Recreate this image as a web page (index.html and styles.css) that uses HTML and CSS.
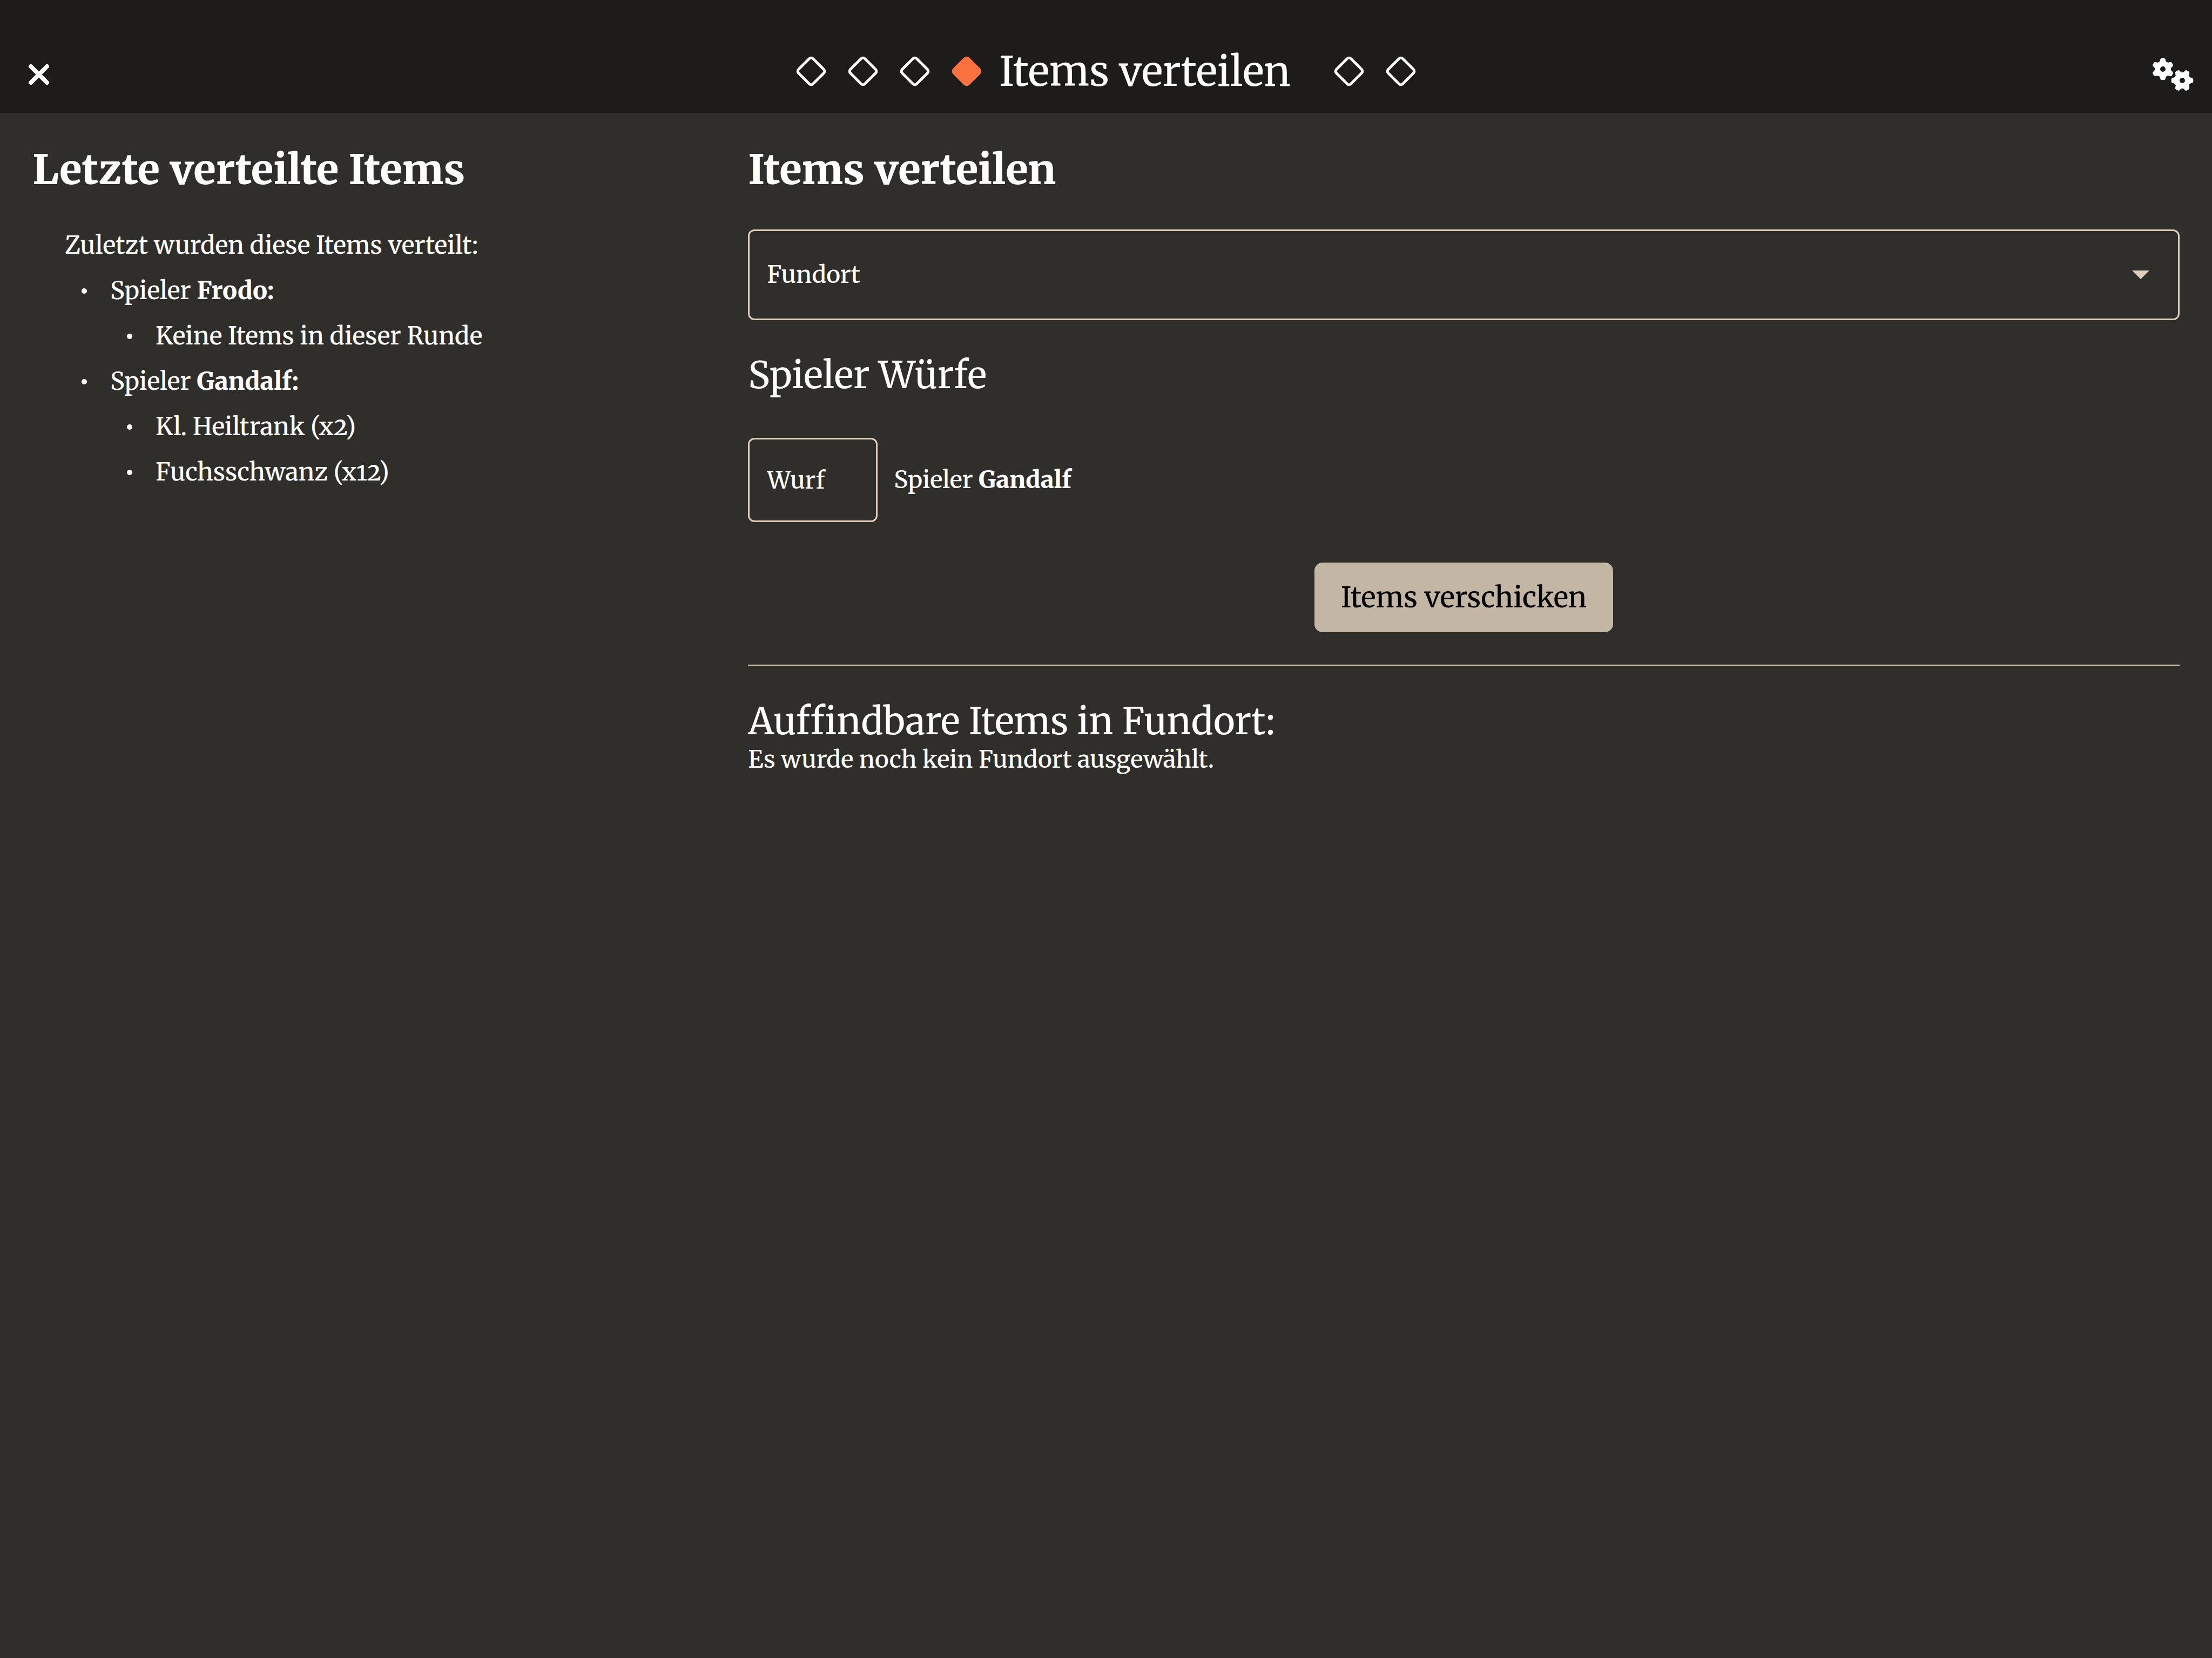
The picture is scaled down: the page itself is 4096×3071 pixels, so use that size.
FILE: index.html
```html
<!DOCTYPE html>
<html lang="de">
<head>
<meta charset="utf-8">
<meta name="viewport" content="width=device-width, initial-scale=1">
<title>Items verteilen</title>
<link rel="stylesheet" href="styles.css">
</head>
<body>
<svg class="defs" aria-hidden="true">
  <symbol id="diamond" viewBox="0 0 56 56">
    <rect x="9" y="9" width="38" height="38" rx="5" transform="rotate(45 28 28)" stroke-width="5"/>
  </symbol>
  <path id="tooth" d="M-9-11Q-5.500-13-5-17Q-4.500-20.300-1.500-20.300H1.500Q4.500-20.300 5-17Q5.500-13 9-11L0 0Z"/>
  <g id="gear">
    <circle r="15"/>
    <use href="#tooth"/>
    <use href="#tooth" transform="rotate(60)"/>
    <use href="#tooth" transform="rotate(120)"/>
    <use href="#tooth" transform="rotate(180)"/>
    <use href="#tooth" transform="rotate(240)"/>
    <use href="#tooth" transform="rotate(300)"/>
    <circle class="gear-hole" r="5"/>
  </g>
</svg>

<header class="topbar">
  <button class="icon-button" type="button" aria-label="Schließen">
    <svg class="icon-close" viewBox="0 0 38 38"><path d="M4 4L34 34M34 4L4 34"/></svg>
  </button>
  <nav class="steps" aria-label="Schritte">
    <button class="step" type="button" aria-label="Schritt 1"><svg><use href="#diamond"/></svg></button>
    <button class="step" type="button" aria-label="Schritt 2"><svg><use href="#diamond"/></svg></button>
    <button class="step" type="button" aria-label="Schritt 3"><svg><use href="#diamond"/></svg></button>
    <button class="step step-active" type="button" aria-label="Schritt 4" aria-current="step"><svg><use href="#diamond"/></svg></button>
    <span class="steps-title">Items verteilen</span>
    <button class="step" type="button" aria-label="Schritt 5"><svg><use href="#diamond"/></svg></button>
    <button class="step" type="button" aria-label="Schritt 6"><svg><use href="#diamond"/></svg></button>
  </nav>
  <button class="icon-button" type="button" aria-label="Einstellungen">
    <svg class="icon-gears" viewBox="0 0 76 62">
      <use href="#gear" transform="translate(19 21)"/>
      <use href="#gear" transform="translate(55 42) rotate(30)"/>
    </svg>
  </button>
</header>

<main class="content">
  <section class="history">
    <h1>Letzte verteilte Items</h1>
    <div class="history-body">
      <p>Zuletzt wurden diese Items verteilt:</p>
      <ul>
        <li><div>Spieler <b>Frodo:</b>
          <ul>
            <li>Keine Items in dieser Runde</li>
          </ul></div>
        </li>
        <li><div>Spieler <b>Gandalf:</b>
          <ul>
            <li>Kl. Heiltrank (x2)</li>
            <li>Fuchsschwanz (x12)</li>
          </ul></div>
        </li>
      </ul>
    </div>
  </section>

  <section class="distribute">
    <h1>Items verteilen</h1>
    <div class="select-box">
      <select class="field" aria-label="Fundort">
        <option>Fundort</option>
      </select>
      <svg class="caret" viewBox="0 0 32 16"><path d="M0 0H32L16 16Z"/></svg>
    </div>
    <h2>Spieler Würfe</h2>
    <div class="roll">
      <input class="field roll-input" id="roll-gandalf" type="text" inputmode="numeric" placeholder="Wurf">
      <label for="roll-gandalf">Spieler <b>Gandalf</b></label>
    </div>
    <button class="send" type="button">Items verschicken</button>
    <hr>
    <h2>Auffindbare Items in Fundort:</h2>
    <p class="hint">Es wurde noch kein Fundort ausgewählt.</p>
  </section>
</main>
</body>
</html>
```
FILE: styles.css
```css
:root {
  --bar: #1d1c1a;
  --page: #2f2e2a;
  --line: #decfbc;
  --sand: #c3b6a5;
  --accent: #fb713f;
}

* {
  box-sizing: border-box;
}

body {
  margin: 0;
  min-height: 100vh;
  background: var(--page);
  color: #fff;
  font: 500 44px/60px Merriweather, "DejaVu Serif Condensed", "DejaVu Serif", serif;
  font-variant-numeric: oldstyle-nums;
}

button,
input,
select {
  font: inherit;
  color: inherit;
  margin: 0;
}

b {
  font-weight: 800;
}

h1,
h2,
p,
ul {
  margin: 0;
  padding: 0;
}

.defs {
  display: none;
}

.topbar {
  display: grid;
  grid-template-columns: 1fr auto 1fr;
  align-items: center;
  height: 209px;
  padding: 54px 32px 0;
  background: var(--bar);
}

.icon-button {
  display: flex;
  justify-self: start;
  padding: 12px 21px 0;
  border: 0;
  background: none;
}

.icon-button:last-child {
  justify-self: end;
  padding: 12px 2px 0;
}

.icon-close {
  width: 38px;
  height: 38px;
  stroke: #fff;
  stroke-width: 8;
  stroke-linecap: round;
}

.icon-gears {
  width: 76px;
  height: 62px;
  fill: #fff;
}

.gear-hole {
  fill: var(--bar);
}

.steps {
  display: flex;
  align-items: center;
}

.step {
  display: flex;
  padding: 20px;
  border: 0;
  background: none;
  fill: none;
  stroke: #fff;
}

.step svg {
  width: 56px;
  height: 56px;
}

.step-active {
  fill: var(--accent);
  stroke: var(--accent);
}

.steps-title {
  padding: 0 60px 0 12px;
  font-size: 75px;
  font-weight: 450;
  line-height: 96px;
}

.content {
  display: grid;
  grid-template-columns: 1fr 2fr;
  padding: 60px;
}

h1 {
  font-size: 76px;
  line-height: 90px;
  font-weight: 800;
}

h2 {
  font-size: 68px;
  line-height: 80px;
  font-weight: 450;
}

.history-body {
  margin-top: 53px;
  padding-left: 60px;
  font-size: 45px;
  line-height: 84px;
}

.history li {
  display: grid;
  grid-template-columns: 84px 1fr;
}

.history li::before {
  content: "";
  width: 10px;
  height: 10px;
  margin: 38px 0 0 31px;
  border-radius: 50%;
  background: #fff;
}

.distribute {
  display: flex;
  flex-direction: column;
}

.field {
  width: 100%;
  padding: 0 32px;
  border: 3px solid var(--line);
  border-radius: 12px;
  background: none;
  appearance: none;
}

.select-box {
  display: grid;
  align-items: center;
  margin: 66px 0 62px;
}

.select-box > * {
  grid-area: 1 / 1;
}

.select-box .field {
  height: 168px;
}

.caret {
  justify-self: end;
  width: 32px;
  height: 16px;
  margin-right: 56px;
  fill: var(--line);
  pointer-events: none;
}

.roll {
  display: flex;
  align-items: center;
  gap: 30px;
  margin-top: 76px;
}

.roll-input {
  width: 240px;
  height: 156px;
}

.roll-input::placeholder {
  color: #fff;
  opacity: 1;
}

.send {
  align-self: center;
  margin-top: 75px;
  padding: 32px 49px;
  border: 0;
  border-radius: 15px;
  background: var(--sand);
  color: #000;
  font-size: 52px;
  line-height: 65px;
}

hr {
  width: 100%;
  height: 3px;
  margin: 60px 0 62px;
  border: 0;
  background: var(--sand);
}

.hint {
  margin-top: 1px;
}
```
